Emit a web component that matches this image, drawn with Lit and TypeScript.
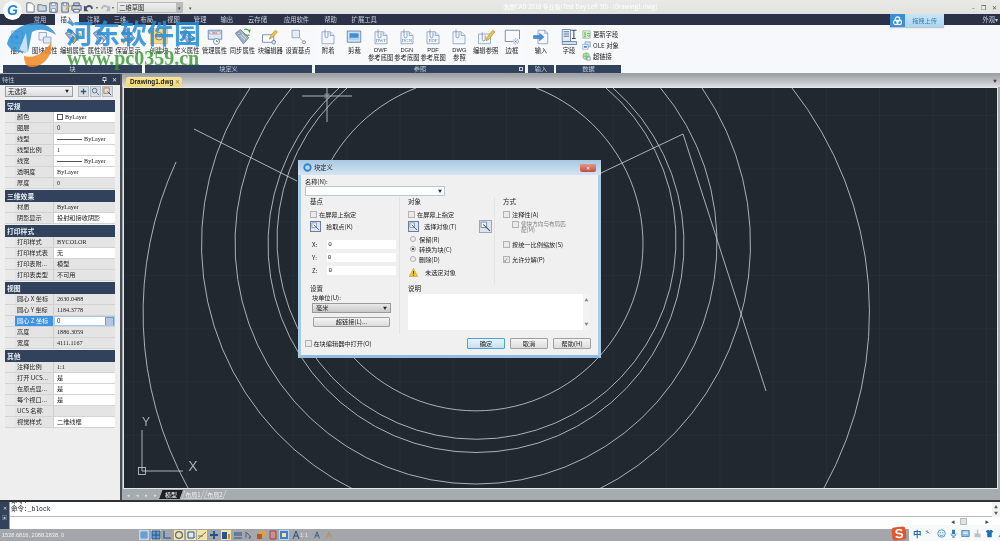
import { css, html, svg, unsafeCSS, LitElement } from 'lit';
import { customElement } from 'lit/decorators.js';

const CJK = unsafeCSS(`"Noto Sans CJK SC", "Liberation Sans", sans-serif`);

// ribbon icons, all on a 24x24 box
const page = (inner: unknown) => svg`
    <path d="M4 5h11l5 5v11H4z" fill="#f3f6fc" stroke="#7d97bd"/>
    <path d="M15 5v5h5" fill="#dfe8f5" stroke="#7d97bd"/>
    <path d="M8 2v9a2 2 0 0 0 4 0V6" fill="none" stroke="#6b86ad"/>
    ${inner}`;
const docLabel = (t: string) =>
    page(svg`<text x="12" y="19" text-anchor="middle" font-size="6.4" font-family="Liberation Serif" fill="#5f7ba6">${t}</text>`);
const tag = (inner: unknown = '') => svg`
    <path d="M3 7l7-5 11 11-7 8z" fill="#9db0ca" stroke="#5f7496"/>
    <circle cx="8" cy="7" r="1.6" fill="#fff" stroke="#5f7496"/>
    <path d="M10 10l6 6M12 8l6 6" stroke="#e6edf6"/>
    ${inner}`;
const pencil = svg`<path d="M13 19l2-5 7-7 2 2-7 7z" fill="#f0c24a" stroke="#a67c1c" stroke-width=".7"/>`;

const ICONS: Record<string, unknown> = {
    insert: svg`<path d="M5 4h14v16H5z" fill="#eef3fa" stroke="#7d97bd"/><path d="M3 12h10l-3-3m3 3l-3 3" fill="none" stroke="#3b78c4" stroke-width="1.6"/>`,
    blockAttr: svg`<path d="M4 6h10v10H4z" fill="#eef3fa" stroke="#7d97bd"/><path d="M10 12h10v8H10z" fill="#dfe8f5" stroke="#7d97bd"/>`,
    tagEdit: tag(pencil),
    tagClean: tag(svg`<circle cx="12" cy="17" r="4.5" fill="#fff" stroke="#54709a"/><path d="M12 14.5v3" stroke="#54709a"/>`),
    tagKeep: tag(svg`<path d="M3 15l3 5 5-7" fill="none" stroke="#e2a520" stroke-width="2"/>`),
    create: svg`<rect x="0" y="1" width="24" height="20" fill="#f6d68f" stroke="#e2b45c"/><circle cx="12" cy="11" r="5" fill="none" stroke="#6a6a5a"/>`,
    tagDefine: tag(svg`<path d="M15 21v-6h6" fill="none" stroke="#54709a" stroke-width="1.3"/>`),
    manage: svg`<path d="M3 3h18v12H3z" fill="#dde7f5" stroke="#54709a"/><path d="M5 5h14v3H5z" fill="#fff" stroke="#8aa0c0"/><text x="12" y="8" font-size="3.6" text-anchor="middle" fill="#c33">BEC</text><circle cx="14" cy="18" r="4" fill="#fff" stroke="#54709a"/><path d="M14 16v2h2" fill="none" stroke="#54709a"/>`,
    sync: tag(svg`<path d="M15 2a5 5 0 0 1 7 3l1-3M22 9a5 5 0 0 1-7-2" fill="none" stroke="#47a33c" stroke-width="1.5"/>`),
    blockEdit: svg`<path d="M2 9h15v10H2z" fill="#fff" stroke="#54709a"/><circle cx="17" cy="19" r="2.5" fill="#dfe8f5" stroke="#54709a"/><path d="M11 15l2-5 6-7 3 2-6 7z" fill="#f0c24a" stroke="#a67c1c" stroke-width=".7"/>`,
    basePoint: svg`<path d="M4 3h10v10H4z" fill="#e4ebf6" stroke="#7d97bd"/><path d="M14 13l6 6" stroke="#8898ad"/><circle cx="20" cy="19" r="2" fill="#fff" stroke="#54709a"/>`,
    attach: page(''),
    clip: svg`<path d="M3 4h18v15H3z" fill="#cfe0f4" stroke="#54709a"/><path d="M6 7h12v8H6z" fill="#3d8fd8"/><path d="M6 13h12v2H6z" fill="#b6d5f2"/>`,
    dwf: docLabel('DWF'),
    dgn: docLabel('DGN'),
    pdf: docLabel('PDF'),
    dwg: page(''),
    editRef: svg`<path d="M2 8h16v13H2z" fill="#f3f6fc" stroke="#7d97bd"/><path d="M7 6v9a2 2 0 0 0 4 0v-5" fill="none" stroke="#6b86ad"/><path d="M12 17l1-4 8-10 3 2-8 10z" fill="#f0c24a" stroke="#a67c1c" stroke-width=".7"/>`,
    frame: svg`<path d="M3 3h19v12" fill="none" stroke="#54709a"/><path d="M3 3v15h10" fill="none" stroke="#54709a"/><circle cx="17" cy="18" r="3.5" fill="none" stroke="#54709a" stroke-dasharray="1.5 1"/><path d="M15.5 16.5l3 3m0-3l-3 3" stroke="#3b78c4"/>`,
    importFile: svg`<path d="M8 3h9l4 4v14H8z" fill="#f3f6fc" stroke="#7d97bd"/><path d="M17 3v4h4" fill="none" stroke="#7d97bd"/><path d="M2 10h8V7l6 5-6 5v-3H2z" fill="#4a8ed6" stroke="#2c69ad" stroke-width=".6"/>`,
    field: svg`<path d="M3 2h11v16H3z" fill="#e4ebf6" stroke="#54709a"/><path d="M5 5h7M5 8h7M5 11h7" stroke="#31527f"/><path d="M15 3h7M18.5 3v11M16 14h5" stroke="#27456e" stroke-width="1.3" fill="none"/><path d="M3 18h19v4H3z" fill="#cfe0f4" stroke="#54709a"/>`,
    updateField: svg`<path d="M2 2h20v20H2z" fill="#dff0da" stroke="#3f8a3a"/><path d="M5 8h6M5 13h6M5 18h6" stroke="#3f8a3a" stroke-width="2"/><path d="M14 10a5 5 0 0 1 7 1M21 15a5 5 0 0 1-7-1" fill="none" stroke="#2d7a2a" stroke-width="2"/>`,
    ole: svg`<path d="M8 2h14v14H8z" fill="#cfe0f4" stroke="#27558e"/><path d="M2 9h14v13H2z" fill="#fff" stroke="#27558e"/><path d="M5 13h8v5H5z" fill="#3d8fd8"/>`,
    link: svg`<circle cx="11" cy="11" r="9" fill="#bfe0b8" stroke="#3f8a3a"/><path d="M3 11h16M11 2v18" stroke="#3f8a3a"/><path d="M13 13h9v9h-9z" fill="#dce8f5" stroke="#27558e"/>`,
};

const QUICK = [
    svg`<path d="M2 1h5l3 3v7H2z" fill="#fff" stroke="#5d6f88"/>`,
    svg`<path d="M1 3h4l1 1h4v6H1z" fill="#cfd8e4" stroke="#5d6f88"/>`,
    svg`<path d="M2 1h8v10H2z" fill="#d5deea" stroke="#4f627e"/><path d="M4 1h4v3H4zM4 7h4v4H4z" fill="#fff" stroke="#4f627e" stroke-width=".6"/>`,
    svg`<path d="M2 1h7v10H2z" fill="#d5deea" stroke="#4f627e"/><path d="M4 1h3v3H4z" fill="#fff" stroke="#4f627e" stroke-width=".6"/><path d="M6 9l1-3 4-3 1 1-4 4z" fill="#d8a93a"/>`,
    svg`<path d="M3 1h6v3H3zM1 4h10v5H1z" fill="#c9d2de" stroke="#4f627e"/><path d="M3 8h6v3H3z" fill="#fff" stroke="#4f627e"/>`,
    svg`<path d="M1 7a4.5 4.5 0 0 1 8-2l2-1v6H6l2-2a2.5 2.5 0 0 0-5 0z" transform="matrix(-1 0 0 1 12 0)" fill="#46556d"/>`,
];

const MENU = ['常用', '插入', '注释', '三维', '布局', '视图', '管理', '输出', '云存储', '应用软件', '帮助', '扩展工具'];

type Tool = { label: string; sub?: string; icon: string };
const PANELS: { title: string; width: number; corner?: boolean; tools: Tool[] }[] = [
    {
        title: '块', width: 139, tools: [
            { label: '插入', icon: 'insert' }, { label: '图块属性', icon: 'blockAttr' },
            { label: '编辑属性', icon: 'tagEdit' }, { label: '属性清理', icon: 'tagClean' }, { label: '保留显示', icon: 'tagKeep' },
        ],
    },
    {
        title: '块定义', width: 167, tools: [
            { label: '创建块', icon: 'create' }, { label: '定义属性', icon: 'tagDefine' }, { label: '管理属性', icon: 'manage' },
            { label: '同步属性', icon: 'sync' }, { label: '块编辑器', icon: 'blockEdit' }, { label: '设置基点', icon: 'basePoint' },
        ],
    },
    {
        title: '参照', width: 210, corner: true, tools: [
            { label: '附着', icon: 'attach' }, { label: '剪裁', icon: 'clip' },
            { label: 'DWF', sub: '参考底图', icon: 'dwf' }, { label: 'DGN', sub: '参考底图', icon: 'dgn' }, { label: 'PDF', sub: '参考底图', icon: 'pdf' },
            { label: 'DWG', sub: '参照', icon: 'dwg' }, { label: '编辑参照', icon: 'editRef' }, { label: '边框', icon: 'frame' },
        ],
    },
    { title: '输入', width: 26, tools: [{ label: '输入', icon: 'importFile' }] },
];

type Row = { name: string; value: string; white?: boolean; kind?: 'swatch' | 'line' | 'mono' | 'selected' };
const SECTIONS: { title: string; rows: Row[] }[] = [
    {
        title: '常规', rows: [
            { name: '颜色', value: 'ByLayer', white: true, kind: 'swatch' }, { name: '图层', value: '0' },
            { name: '线型', value: 'ByLayer', white: true, kind: 'line' }, { name: '线型比例', value: '1', white: true, kind: 'mono' },
            { name: '线宽', value: 'ByLayer', white: true, kind: 'line' }, { name: '透明度', value: 'ByLayer', white: true, kind: 'mono' },
            { name: '厚度', value: '0', kind: 'mono' },
        ],
    },
    {
        title: '三维效果', rows: [
            { name: '材质', value: 'ByLayer', kind: 'mono' }, { name: '阴影显示', value: '投射和接收阴影', white: true },
        ],
    },
    {
        title: '打印样式', rows: [
            { name: '打印样式', value: 'BYCOLOR', kind: 'mono' }, { name: '打印样式表', value: '无', white: true },
            { name: '打印表附...', value: '模型' }, { name: '打印表类型', value: '不可用' },
        ],
    },
    {
        title: '视图', rows: [
            { name: '圆心 X 坐标', value: '2630.0488', kind: 'mono' }, { name: '圆心 Y 坐标', value: '1184.3778', kind: 'mono' },
            { name: '圆心 Z 坐标', value: '0', kind: 'selected' }, { name: '高度', value: '1886.3059', kind: 'mono' },
            { name: '宽度', value: '4111.1167', kind: 'mono' },
        ],
    },
    {
        title: '其他', rows: [
            { name: '注释比例', value: '1:1', kind: 'mono' }, { name: '打开 UCS...', value: '是', white: true },
            { name: '在原点显...', value: '是', white: true }, { name: '每个视口...', value: '是', white: true },
            { name: 'UCS 名称', value: '' }, { name: '视觉样式', value: '二维线框', white: true },
        ],
    },
];

// status bar toggles: [active background, glyph]
const STATUS: [string, unknown][] = [
    ['#b9d6f0', svg`<path d="M1 3h8M1 5h8M1 7h8M3 1v8M5 1v8M7 1v8" stroke="#3a72b0" stroke-width=".7"/>`],
    ['#f4e3a8', svg`<path d="M1 1h8v8H1zM1 5h8M5 1v8" fill="#5f9bd6" stroke="#27558e"/>`],
    ['transparent', svg`<path d="M2 1v7h7" fill="none" stroke="#27558e" stroke-width="1.2"/>`],
    ['#f4e3a8', svg`<circle cx="5" cy="5" r="3.4" fill="none" stroke="#586b85" stroke-width="1.2"/>`],
    ['#f4e3a8', svg`<path d="M2 2h6v6H2z" fill="#dfe8f5" stroke="#27558e"/>`],
    ['#f4e3a8', svg`<path d="M1 9l8-7M1 6h5" stroke="#7a7a4a"/>`],
    ['transparent', svg`<path d="M5 1v8M1 5h8" stroke="#1f4f93" stroke-width="1.8"/>`],
    ['#f4e3a8', svg`<path d="M1 2h5v7H1z" fill="#27558e"/><path d="M7 4h2v5H7z" fill="#d98a2b"/>`],
    ['transparent', svg`<path d="M1 3h8M1 5h8M1 8h8" stroke="#27558e" stroke-width="1.2"/>`],
    ['transparent', svg`<path d="M2 2l5 5-2 0 1 2M2 2v6" fill="none" stroke="#4f627e"/>`],
    ['transparent', svg`<path d="M3 1h6v6H3z" fill="#e0a33a"/><path d="M1 4h5v5H1z" fill="#b8552a"/>`],
    ['transparent', svg`<path d="M2 1h6v8H2z" fill="#d88a8a" stroke="#8a4a4a"/>`],
    ['#b9d6f0', svg`<path d="M1 1h8v8H1z" fill="#3f7fc4"/><path d="M3 3h4v4H3z" fill="#f3e3a8"/>`],
    ['transparent', svg`<path d="M5 1L2 9M5 1l3 8M3 6h4" stroke="#2f4f80" fill="none"/>`],
];

const TRAY = [
    svg`<path d="M1 3h3l-1-1M2 6l2-2 2 2" stroke="#3a78b8" fill="none"/>`,
    svg`<circle cx="6" cy="6" r="5" fill="#e7f3fb" stroke="#2f7fc0"/><circle cx="4.3" cy="5" r=".8" fill="#2f7fc0"/><circle cx="7.7" cy="5" r=".8" fill="#2f7fc0"/><path d="M3.5 7.5a3 3 0 0 0 5 0" fill="none" stroke="#2f7fc0"/>`,
    svg`<path d="M4 1h4v6H4z" fill="#2f7fc0"/><path d="M2.5 6a3.5 3.5 0 0 0 7 0M6 9.5V11M4 11h4" stroke="#2f7fc0" fill="none"/>`,
    svg`<path d="M1 2h10v8H1z" fill="#8fc0e4" stroke="#2f7fc0"/><path d="M3 4h6M3 6h6" stroke="#fff"/>`,
    svg`<path d="M5 1h2v5H5zM2 6h8v5H2z" fill="#b9c1c9"/>`,
    svg`<path d="M1 3l3-2 2 1 2-1 3 2-1.5 2H9v6H3V5H2.5z" fill="#1f6fb5"/>`,
    svg`<path d="M2 10l5-5a3 3 0 0 1 4-3L9 4l-1-1-1 2-4 6z" fill="#2f7fc0"/>`,
];

@customElement('prop-panel')
class PropPanel extends LitElement {
    static override styles = css`
        :host {
            display: block;
            width: 120px;
            background: #eeeeee;
            font-family: ${CJK};
            box-sizing: border-box;
            overflow: hidden;
        }
        .head {
            height: 11px;
            background: #2d3a50;
            color: #b8c0cc;
            font-size: 6.2px;
            line-height: 11px;
            padding: 0 3px 0 2px;
            display: flex;
            justify-content: space-between;
            align-items: center;
        }
        .head span:last-child { display: flex; align-items: center; gap: 5px; color: #e4e8ee; }
        .head svg { width: 5px; height: 6px; }
        .sel-row {
            display: flex;
            align-items: center;
            gap: 4px;
            padding: 2px 5px 2px 5px;
            height: 13px;
            box-sizing: border-box;
        }
        .sel {
            width: 68px;
            height: 11px;
            border: 1px solid #98a0a8;
            background: linear-gradient(#f6f6f6, #dcdcdc);
            font-size: 6.3px;
            line-height: 9px;
            box-sizing: border-box;
            padding-left: 2px;
            display: flex;
            justify-content: space-between;
            color: #222;
        }
        .sel i { font-style: normal; font-size: 4px; padding-right: 3px; line-height: 9px; }
        .mini {
            width: 11px;
            height: 11px;
            border: 1px solid #b4bac2;
            background: #d9dee5;
            box-sizing: border-box;
        }
        .mini svg { display: block; width: 9px; height: 9px; }
        .minis { display: flex; gap: 1px; margin-left: 1px; }
        .list { padding: 2px 5px 0 5px; }
        .sec-head {
            height: 12px;
            background: #30425c;
            color: #e8edf2;
            font-size: 6.8px;
            font-weight: 700;
            line-height: 12px;
            padding-left: 2px;
        }
        .row {
            display: grid;
            grid-template-columns: 10px 39px 1fr;
            height: 11px;
            font-size: 6.2px;
            line-height: 10px;
            color: #222;
            box-sizing: border-box;
            border-bottom: 1px solid #d3d3d3;
            white-space: nowrap;
        }
        .group { margin-bottom: 1px; }
        .gutter { background: #e9e9e9; }
        .name { background: #e4e4e4; padding-left: 2px; overflow: hidden; border-right: 1px solid #cfcfcf; }
        .value { background: #e4e4e4; padding-left: 3px; overflow: hidden; display: flex; align-items: center; gap: 2px; }
        .value.white { background: #fff; }
        .value.mono { font-family: "Liberation Serif", serif; font-size: 6.2px; }
        .selected .name { background: #3f92e2; color: #fff; }
        .selected .value { background: #fff; outline: 1px solid #a8c8ea; outline-offset: -1px; justify-content: space-between; }
        .swatch { width: 6px; height: 6px; border: 1px solid #555; background: #fff; box-sizing: border-box; }
        .line { width: 25px; border-top: 1px solid #555; }
        .pick { width: 9px; height: 9px; background: #b5c7df; border: 1px solid #7f97b8; box-sizing: border-box; margin-right: 1px; }
    `;

    private _value(r: Row) {
        if (r.kind === 'swatch' || r.kind === 'line') {
            return html`<div class="value white mono"><span class=${r.kind}></span>${r.value}</div>`;
        }
        if (r.kind === 'selected') {
            return html`<div class="value"><span>${r.value}</span><span class="pick"></span></div>`;
        }
        return html`<div class="value ${r.white ? 'white' : ''} ${r.kind === 'mono' ? 'mono' : ''}">${r.value}</div>`;
    }

    override render() {
        return html`
            <div class="head">
                <span>特性</span>
                <span>
                    <svg viewBox="0 0 5 6"><path d="M1 .5h3v3H1zM.5 3.5h4M2.5 3.5V6" fill="none" stroke="#e4e8ee" stroke-width=".8"/></svg>
                    ✕
                </span>
            </div>
            <div class="sel-row">
                <div class="sel"><span>无选择</span><i>▼</i></div>
                <div class="minis">
                    <div class="mini"><svg viewBox="0 0 10 10"><path d="M5 2v6M2 5h6" stroke="#27558e" stroke-width="1.4"/></svg></div>
                    <div class="mini"><svg viewBox="0 0 10 10"><circle cx="4" cy="4" r="2.6" fill="none" stroke="#586b85"/><path d="M6 6l3 3" stroke="#586b85"/></svg></div>
                    <div class="mini"><svg viewBox="0 0 10 10"><path d="M1 1h6v6H1z" fill="none" stroke="#c0802a"/><path d="M5 5l4 4" stroke="#27558e"/></svg></div>
                </div>
            </div>
            <div class="list">
                ${SECTIONS.map(s => html`
                    <div class="group">
                        <div class="sec-head">${s.title}</div>
                        ${s.rows.map(r => html`
                            <div class="row ${r.kind === 'selected' ? 'selected' : ''}">
                                <div class="gutter"></div>
                                <div class="name">${r.name}</div>
                                ${this._value(r)}
                            </div>
                        `)}
                    </div>
                `)}
            </div>
        `;
    }
}

@customElement('block-dialog')
class BlockDialog extends LitElement {
    static override styles = css`
        :host {
            position: absolute;
            left: 298px;
            top: 160px;
            width: 303px;
            height: 198px;
            box-sizing: border-box;
            background: #f0f0f0;
            border: 3px solid #a9cbe6;
            border-top: 0;
            border-bottom-color: #8fbde0;
            border-radius: 2px 2px 0 0;
            font-family: ${CJK};
            font-size: 6.2px;
            color: #222;
            display: block;
        }
        .title {
            height: 15px;
            margin: 0 -3px;
            padding: 0 5px;
            background: linear-gradient(#a8c8e2, #d5e5f2);
            display: flex;
            align-items: center;
            gap: 2px;
            font-size: 6.3px;
        }
        .title svg { width: 9px; height: 9px; }
        .close {
            margin-left: auto;
            width: 16px;
            height: 8px;
            background: linear-gradient(#e09a8a, #c14e3e);
            color: #fff;
            font-size: 5px;
            line-height: 8px;
            text-align: center;
            border-radius: 0 0 2px 2px;
        }
        .body { padding: 2px 4px 0 4px; }
        .lbl { height: 9px; line-height: 9px; }
        .combo {
            width: 140px;
            height: 10px;
            background: #fff;
            border: 1px solid #b4c8dc;
            box-sizing: border-box;
            text-align: right;
            font-size: 4px;
            line-height: 9px;
            padding-right: 2px;
        }
        .grid {
            display: grid;
            grid-template-columns: 94px 95px 100px;
            grid-template-rows: 87px 50px;
            margin-top: 1px;
        }
        .col { padding-left: 5px; position: relative; box-sizing: border-box; }
        .col.line { border-left: 1px solid #e3e3e3; padding-left: 8px; }
        .col.note { grid-column: 2 / 4; border-left: 1px solid #e3e3e3; padding-left: 8px; }
        .gtitle { height: 9px; line-height: 9px; font-size: 6.5px; margin-bottom: 3px; }
        .gtitle.tight { margin-bottom: 0; }
        .gtitle.note { margin-bottom: 1px; }
        .line-row { display: flex; align-items: center; height: 10px; gap: 2px; white-space: nowrap; }
        .box {
            width: 7px;
            height: 7px;
            background: #eaeaea;
            border: 1px solid #b2b2b2;
            box-sizing: border-box;
            flex: none;
            font-size: 5px;
            line-height: 6px;
            color: #446;
        }
        .pick-row { display: flex; align-items: center; gap: 5px; height: 15px; margin-top: 0; white-space: nowrap; }
        .pick {
            width: 11px;
            height: 11px;
            background: #dbe4f0;
            border: 1px solid #6a7f9e;
            box-sizing: border-box;
            flex: none;
        }
        .pick svg { display: block; width: 9px; height: 9px; }
        .pick.quick { width: 13px; height: 13px; margin-left: 17px; border-color: #9aa8ba; }
        .pick.quick svg { width: 11px; height: 11px; }
        .xyz { display: flex; align-items: center; height: 13px; gap: 10px; padding-left: 2px; margin-top: 0; }
        .xyz .input {
            width: 69px;
            height: 9px;
            background: #fff;
            line-height: 9px;
            padding-left: 1px;
            box-sizing: border-box;
            font-family: "Liberation Mono", monospace;
            font-size: 6px;
        }
        .xyz.first { margin-top: 4px; }
        .radio {
            width: 6px;
            height: 6px;
            border: 1px solid #adadad;
            border-radius: 50%;
            background: #eee;
            box-sizing: border-box;
            flex: none;
            margin-left: 2px;
            margin-right: 1px;
        }
        .radio.on { background: radial-gradient(#3f4f66 45%, #e8e8e8 50%); }
        .warn { display: flex; align-items: center; gap: 7px; height: 12px; margin-top: 2px; padding-left: 1px; }
        .warn svg { width: 9px; height: 9px; }
        .wrap { display: flex; gap: 2px; padding-left: 9px; margin: 2px 0 5px 0; color: #808080; font-size: 5.6px; line-height: 6px; height: 13px; }
        .wrap .text { width: 46px; }
        .gap5 { margin-top: 5px; }
        .ind { padding-left: 2px; }
        .sel {
            width: 79px;
            height: 10px;
            margin: 1px 0 4px 2px;
            background: linear-gradient(#e9e9e9, #c9c9c9);
            border: 1px solid #9a9a9a;
            box-sizing: border-box;
            display: flex;
            justify-content: space-between;
            padding: 0 3px;
            line-height: 8px;
        }
        .sel i { font-style: normal; font-size: 4px; }
        .btn {
            background: linear-gradient(#f4f4f4, #dcdcdc);
            border: 1px solid #a0a0a0;
            border-radius: 1px;
            box-sizing: border-box;
            text-align: center;
            color: #222;
        }
        .bind { width: 77px; height: 10px; line-height: 8px; margin-left: 3px; }
        .area { display: flex; width: 182px; height: 36px; margin-top: 0; }
        .area .white { flex: 1; background: #fff; }
        .area .bar { width: 7px; color: #888; font-size: 4px; display: flex; flex-direction: column; justify-content: space-between; align-items: center; padding: 3px 0; background: #f3f3f3; }
        .foot { display: flex; align-items: center; height: 12px; margin-top: 3px; }
        .foot .btn { width: 38px; height: 11px; line-height: 9px; margin-left: 5px; }
        .foot .btn.main { border-color: #4f9fd8; background: linear-gradient(#e8f4fb, #c6e0f2); margin-left: auto; }
        .foot .last { margin-right: 3px; }
    `;

    override render() {
        const lens = html`<svg viewBox="0 0 10 10"><path d="M1 1h5v5H1z" fill="#fff" stroke="#5d6f88" stroke-width=".7"/><path d="M3 3l6 6" stroke="#3f5a80"/></svg>`;
        return html`
            <div class="title">
                <svg viewBox="0 0 10 10"><circle cx="5" cy="5" r="3.6" fill="none" stroke="#2f86cf" stroke-width="2"/></svg>
                <span>块定义</span>
                <span class="close">✕</span>
            </div>
            <div class="body">
                <div class="lbl">名称(N):</div>
                <div class="combo">▼</div>
                <div class="grid">
                    <div class="col">
                        <div class="gtitle">基点</div>
                        <div class="line-row"><span class="box"></span>在屏幕上指定</div>
                        <div class="pick-row"><span class="pick">${lens}</span>拾取点(K)</div>
                        ${['X', 'Y', 'Z'].map((a, i) => html`
                            <div class="xyz ${i === 0 ? 'first' : ''}"><span>${a}:</span><div class="input">0</div></div>
                        `)}
                    </div>
                    <div class="col line">
                        <div class="gtitle">对象</div>
                        <div class="line-row"><span class="box"></span>在屏幕上指定</div>
                        <div class="pick-row"><span class="pick">${lens}</span>选择对象(T)<span class="pick quick">${lens}</span></div>
                        <div class="line-row"><span class="radio"></span>保留(R)</div>
                        <div class="line-row"><span class="radio on"></span>转换为块(C)</div>
                        <div class="line-row"><span class="radio"></span>删除(D)</div>
                        <div class="warn">
                            <svg viewBox="0 0 10 10"><path d="M5 .5L9.8 9.5H.2z" fill="#f4c430" stroke="#b58a12" stroke-width=".5"/><path d="M5 3.5v3M5 7.5v1" stroke="#333"/></svg>
                            未选定对象
                        </div>
                    </div>
                    <div class="col line">
                        <div class="gtitle">方式</div>
                        <div class="line-row"><span class="box"></span>注释性(A)</div>
                        <div class="wrap"><span class="box"></span><span class="text">使块方向与布局匹配(M)</span></div>
                        <div class="line-row"><span class="box"></span>按统一比例缩放(S)</div>
                        <div class="line-row gap5"><span class="box">✓</span>允许分解(P)</div>
                    </div>
                    <div class="col">
                        <div class="gtitle tight">设置</div>
                        <div class="lbl ind">块单位(U):</div>
                        <div class="sel"><span>毫米</span><i>▼</i></div>
                        <div class="btn bind">超链接(L)...</div>
                    </div>
                    <div class="col note">
                        <div class="gtitle note">说明</div>
                        <div class="area"><div class="white"></div><div class="bar"><span>▲</span><span>▼</span></div></div>
                    </div>
                </div>
                <div class="foot">
                    <span class="box"></span>&nbsp;在块编辑器中打开(O)
                    <div class="btn main">确定</div>
                    <div class="btn">取消</div>
                    <div class="btn last">帮助(H)</div>
                </div>
            </div>
        `;
    }
}

@customElement('app-root')
export class AppRoot extends LitElement {
    static override styles = css`
        :host {
            display: block;
            width: 1000px;
            height: 541px;
            position: relative;
            overflow: hidden;
            font-family: ${CJK};
            background: #a6abb0;
            filter: blur(0.3px);
        }
        .titlebar {
            height: 14px;
            background: linear-gradient(#e9e9e6, #e2e2df);
            display: flex;
            align-items: center;
            position: relative;
        }
        .app-logo {
            width: 19px;
            height: 19px;
            margin: 1px 0 0 3px;
            align-self: flex-start;
            border-radius: 50%;
            background: #fff;
            color: #1e86cc;
            font: italic 700 14px/19px "Liberation Sans", sans-serif;
            text-align: center;
            z-index: 1;
            flex: none;
        }
        .quick { display: flex; align-items: center; gap: 0; margin-left: 3px; }
        .quick svg { width: 11px; height: 11px; margin-right: .6px; display: block; }
        .quick .tiny { font-size: 4px; color: #555; margin-left: 1px; margin-right: 2px; }
        .workspace-combo {
            width: 66px;
            height: 11px;
            margin-left: 1px;
            background: linear-gradient(#efefef, #dcdcdc);
            border: 1px solid #b9b9b9;
            box-sizing: border-box;
            font-size: 6.3px;
            line-height: 9px;
            padding-left: 1px;
            color: #222;
            position: relative;
            flex: none;
        }
        .workspace-combo::after {
            content: '▾';
            position: absolute;
            right: 0;
            top: 0;
            width: 6px;
            height: 9px;
            background: #bbb;
            font-size: 5px;
            text-align: center;
            color: #444;
        }
        .more { font-size: 5px; color: #555; margin-left: 6px; }
        .doc-title {
            position: absolute;
            left: 503px;
            top: 2px;
            font-size: 6px;
            line-height: 10px;
            color: #fff;
            white-space: nowrap;
        }
        .win { margin-left: auto; display: flex; gap: 6px; padding-right: 3px; font-size: 6px; color: #555; }
        .menubar {
            height: 11px;
            background: #2b3248;
            display: flex;
            align-items: center;
            position: relative;
            padding-left: 28px;
            color: #c8cfda;
            font-size: 6.3px;
        }
        .menu-item { width: 24px; text-align: center; line-height: 11px; white-space: nowrap; flex: none; margin-right: 2.7px; }
        .menu-item.wide3 { width: 32px; margin-right: 4px; }
        .menu-item.wide4 { width: 38px; margin-right: 3px; }
        .menu-item.active { background: #f4f6f9; color: #333; }
        .upload {
            position: absolute;
            left: 890px;
            top: 0;
            width: 54px;
            height: 13px;
            display: flex;
            z-index: 1;
            background: linear-gradient(#c8e6f8, #a9d6f2);
            color: #3f7ba8;
            font-size: 6.2px;
            line-height: 13px;
            box-shadow: 0 1px 1px rgba(0, 0, 0, 0.2);
        }
        .upload .ico { width: 15px; background: #3a8fd8; display: flex; align-items: center; justify-content: center; }
        .upload .ico svg { width: 11px; height: 10px; }
        .upload .txt { flex: 1; text-align: center; }
        .skin { position: absolute; right: 2px; top: 0; line-height: 11px; font-size: 6.3px; color: #c8cfda; }
        .ribbon {
            height: 49px;
            background: #f6f8fc;
            display: flex;
            padding-left: 3px;
            gap: 3px;
            box-sizing: border-box;
            border-bottom: 1px solid #a0a4a8;
        }
        .panel { display: flex; flex-direction: column; background: #f8f9fb; }
        .panel.data { width: 65px; margin-left: -1px; }
        .tools { flex: 1; display: flex; min-height: 0; }
        .tool { flex: 1 1 0; min-width: 0; display: flex; flex-direction: column; align-items: center; padding-top: 3px; font-size: 6.3px; line-height: 7px; color: #222; white-space: nowrap; }
        .tool svg { width: 18px; height: 18px; flex: none; margin-bottom: 1px; }
        .tool .latin { font-family: "Liberation Sans", sans-serif; font-size: 5.8px; }
        .panel-foot {
            height: 8px;
            background: #30425c;
            color: #c8d0da;
            font-size: 6.2px;
            line-height: 8px;
            text-align: center;
            position: relative;
            margin-bottom: 0;
        }
        .corner { position: absolute; right: 2px; top: 1.5px; width: 4px; height: 4px; border: 1px solid #cdd5df; box-sizing: border-box; }
        .data-tools { flex: 1; display: flex; }
        .data-big { flex: none; width: 26px; }
        .data-list { flex: 1; display: flex; flex-direction: column; padding-top: 4px; gap: 1px; }
        .data-row { display: flex; align-items: center; gap: 2px; height: 10px; font-size: 6.3px; color: #222; white-space: nowrap; }
        .data-row svg { width: 9px; height: 9px; flex: none; }
        .workspace { height: 426px; display: flex; }
        .workarea {
            flex: 1;
            display: flex;
            flex-direction: column;
            border-left: 2px solid #4a4f56;
            padding: 0 2px 0 1px;
            background: #a6abb0;
        }
        .doc-tabs {
            height: 13px;
            margin: 0 -2px 0 -1px;
            padding-left: 4px;
            background: linear-gradient(#9b9fa3, #dcdee0);
            display: flex;
            align-items: flex-end;
            position: relative;
        }
        .doc-tab {
            width: 56px;
            height: 10px;
            background: linear-gradient(#f9e79a, #f4d86a);
            border-radius: 3px 3px 0 0;
            font: 700 6.4px/10px "Liberation Sans", sans-serif;
            color: #222;
            padding-left: 4px;
            box-sizing: border-box;
            display: flex;
            justify-content: space-between;
            padding-right: 2px;
        }
        .doc-tab i { font-style: normal; font-weight: 400; color: #777; }
        .tab-menu { position: absolute; right: 3px; top: 4px; font-size: 4px; color: #444; }
        .canvas { height: 402px; border: 1px solid #e4e6e8; box-sizing: border-box; background: #212830; position: relative; width: 875px; }
        .canvas svg { display: block; width: 873px; height: 400px; }
        .layouts { height: 11px; display: flex; align-items: center; padding-left: 1px; font-size: 6px; color: #eef0f2; }
        .nav { width: 9px; font-size: 5px; color: #dfe2e5; text-align: center; }
        .ltab { width: 20px; height: 9px; line-height: 9px; text-align: center; border: 1px solid #c8ccd0; border-top: 0; box-sizing: border-box; margin-left: 2px; transform: skewX(-20deg); }
        .ltab span { display: block; transform: skewX(20deg); }
        .ltab.on { background: #1e2126; border-color: #1e2126; color: #fff; margin-left: 1px; }
        .command {
            height: 29px;
            border-top: 2px solid #2f3338;
            display: flex;
            box-sizing: border-box;
            background: #fff;
        }
        .cmd-side { width: 9px; background: #30425c; color: #d4dbe4; font-size: 5px; text-align: center; line-height: 9px; padding-top: 1px; flex: none; }
        .cmd-main { flex: 1; display: flex; flex-direction: column; position: relative; border-left: 1px solid #9aa0a6; }
        .cmd-log { height: 15px; font: 6.4px/7px "Liberation Mono", "Noto Sans CJK SC", monospace; color: #222; padding-left: 1px; overflow: hidden; border-bottom: 1px solid #bbb; white-space: nowrap; box-sizing: border-box; }
        .cmd-log div { height: 7px; }
        .cmd-log .cut { margin-top: -4px; }
        .cmd-log .now { margin-top: 1px; }
        .cmd-input { flex: 1; position: relative; }
        .vbar { position: absolute; right: 0; top: 0; width: 8px; height: 15px; font-size: 4px; color: #555; display: flex; flex-direction: column; justify-content: space-between; align-items: center; padding: 2px 0; box-sizing: border-box; background: #f3f3f3; }
        .hbar { position: absolute; left: 940px; top: 0; width: 40px; height: 10px; display: flex; align-items: center; justify-content: space-between; font-size: 4px; color: #444; padding: 0 1px; box-sizing: border-box; }
        .hbar b { width: 7px; height: 7px; background: #dfe3e7; border: 1px solid #b7bcc1; box-sizing: border-box; position: absolute; left: 10px; top: 1px; }
        .statusbar { height: 12px; background: #a3a7ab; display: flex; align-items: center; color: #f1f2f3; font: 5.6px/12px "Liberation Sans", sans-serif; position: relative; padding-left: 2px; }
        .stat-icons { position: absolute; left: 139px; top: 1px; display: flex; }
        .stat { width: 10px; height: 10px; margin-right: 1.7px; }
        .stat svg { display: block; width: 10px; height: 10px; }
        .scale { position: absolute; left: 300px; top: 0; color: #e9ebed; font-size: 5.6px; }
        .stat-end { position: absolute; left: 313px; top: 2px; display: flex; gap: 4px; }
        .stat-end svg { width: 8px; height: 8px; }
        .ime {
            position: absolute;
            left: 891px;
            top: 525px;
            width: 109px;
            height: 16px;
            background: linear-gradient(to right, transparent 18px, #f8f9fa 18px);
            display: flex;
            align-items: center;
            gap: 3px;
            z-index: 3;
            color: #1f6fb5;
            font-size: 8.5px;
            font-weight: 700;
        }
        .ime svg { width: 9px; height: 9px; flex: none; }
        .sogou {
            width: 14px;
            height: 13px;
            background: #e2562a;
            border-radius: 3px;
            color: #fff;
            font: 700 13px/13px "Liberation Sans", sans-serif;
            text-align: center;
            margin: 0 4px 0 1px;
            transform: rotate(-6deg);
            flex: none;
        }
        .wm { position: absolute; left: 0; top: 0; width: 0; height: 0; z-index: 4; pointer-events: none; }
        .wm svg { position: absolute; left: 4px; top: 20px; width: 56px; height: 50px; opacity: 0.85; }
        .wm-cn { position: absolute; left: 66px; top: 16px; white-space: nowrap; font: 700 27px/34px "Noto Sans CJK SC", sans-serif; color: rgba(34, 140, 216, 0.85); }
        .wm-url { position: absolute; left: 67px; top: 47px; white-space: nowrap; font: 700 20px/22px "Liberation Serif", serif; color: rgba(52, 150, 44, 0.8); }
    `;

    private _menuClass(m: string) {
        if (m === '插入') return 'menu-item active';
        if (m.length === 3) return 'menu-item wide3';
        if (m.length === 4) return 'menu-item wide4';
        return 'menu-item';
    }

    private _canvas() {
        const arcs = [
            // outermost circle, left and right parts
            'M176 162A363 363 0 0 0 188 488', 'M792 88A363 363 0 0 1 824 488',
            'M250 88A274.5 274.5 0 1 0 702 88', 'M291.5 88A241 241 0 1 0 660.5 88',
            'M339 88A208 208 0 1 0 613 88', 'M347 88A199.5 199.5 0 1 0 606 88',
            'M416 88A167 167 0 1 0 536 88',
        ];
        return html`
            <svg viewBox="124 88 873 400">
                <defs>
                    <pattern id="major" x="133" y="115" width="53.3" height="53.3" patternUnits="userSpaceOnUse">
                        <path d="M53.3 0H0V53.3" fill="none" stroke="#2a323b" stroke-width="1"/>
                    </pattern>
                </defs>
                <rect x="124" y="88" width="873" height="400" fill="url(#major)"/>
                <g fill="none" stroke="#d0d3d6" stroke-width=".8">
                    ${arcs.map(d => svg`<path d=${d}/>`)}
                    <path d="M194 129L297 181"/>
                    <path d="M601 173L683 134L766 391"/>
                    <path d="M302 96H352M327 88V122"/>
                    <rect x="325" y="94" width="4" height="4" stroke="#8f9499"/>
                    <path d="M142 430V471M142 471H183"/>
                    <rect x="138.5" y="467.5" width="7" height="7"/>
                </g>
                <text x="146" y="426" text-anchor="middle" font-size="12" font-family="Liberation Sans" fill="#a9adb2">Y</text>
                <text x="193" y="471" text-anchor="middle" font-size="14" font-family="Liberation Sans" fill="#a9adb2">X</text>
            </svg>
        `;
    }

    override render() {
        return html`
            <div class="titlebar">
                <div class="app-logo">G</div>
                <div class="quick">
                    ${QUICK.map(q => html`<svg viewBox="0 0 12 12">${q}</svg>`)}
                    <span class="tiny">▾</span>
                    <svg viewBox="0 0 12 12"><path d="M1 7a4.5 4.5 0 0 1 8-2l2-1v6H6l2-2a2.5 2.5 0 0 0-5 0z" fill="#b4bac2"/></svg>
                    <span class="tiny">▾</span>
                </div>
                <div class="workspace-combo">二维草图</div>
                <span class="more">▾</span>
                <div class="doc-title">浩辰CAD 2018 专业版(Test Day Left 30) - [Drawing1.dwg]</div>
                <div class="win"><span>–</span><span>❐</span><span>✕</span></div>
            </div>
            <div class="menubar">
                ${MENU.map(m => html`<div class=${this._menuClass(m)}>${m}</div>`)}
                <div class="upload">
                    <div class="ico"><svg viewBox="0 0 12 10"><circle cx="4" cy="6.5" r="2.4" fill="none" stroke="#fff" stroke-width="1.3"/><circle cx="8" cy="6.5" r="2.4" fill="none" stroke="#fff" stroke-width="1.3"/><circle cx="6" cy="3" r="2.4" fill="none" stroke="#fff" stroke-width="1.3"/></svg></div>
                    <div class="txt">拖拽上传</div>
                </div>
                <div class="skin">外观▾</div>
            </div>
            <div class="ribbon">
                ${PANELS.map(p => html`
                    <div class="panel" style="width:${p.width}px">
                        <div class="tools">
                            ${p.tools.map(t => html`
                                <div class="tool">
                                    <svg viewBox="0 0 24 24">${ICONS[t.icon]}</svg>
                                    <span class=${t.sub ? 'latin' : ''}>${t.label}</span>
                                    ${t.sub ? html`<span>${t.sub}</span>` : ''}
                                </div>
                            `)}
                        </div>
                        <div class="panel-foot">${p.title}${p.corner ? html`<span class="corner"></span>` : ''}</div>
                    </div>
                `)}
                <div class="panel data">
                    <div class="data-tools">
                        <div class="tool data-big"><svg viewBox="0 0 24 24">${ICONS.field}</svg><span>字段</span></div>
                        <div class="data-list">
                            <div class="data-row"><svg viewBox="0 0 24 24">${ICONS.updateField}</svg>更新字段</div>
                            <div class="data-row"><svg viewBox="0 0 24 24">${ICONS.ole}</svg>OLE 对象</div>
                            <div class="data-row"><svg viewBox="0 0 24 24">${ICONS.link}</svg>超链接</div>
                        </div>
                    </div>
                    <div class="panel-foot">数据</div>
                </div>
            </div>
            <div class="workspace">
                <prop-panel></prop-panel>
                <div class="workarea">
                    <div class="doc-tabs">
                        <div class="doc-tab"><span>Drawing1.dwg</span><i>✕</i></div>
                        <span class="tab-menu">▼</span>
                    </div>
                    <div class="canvas">${this._canvas()}</div>
                    <div class="layouts">
                        ${['◂', '◂', '▸', '▸'].map(n => html`<span class="nav">${n}</span>`)}
                        <div class="ltab on"><span>模型</span></div>
                        <div class="ltab"><span>布局1</span></div>
                        <div class="ltab"><span>布局2</span></div>
                    </div>
                </div>
            </div>
            <div class="command">
                <div class="cmd-side">✕<br />▣</div>
                <div class="cmd-main">
                    <div class="cmd-log"><div class="cut">命令:</div><div class="now">命令:_block</div></div>
                    <div class="vbar"><span>▲</span><span>▼</span></div>
                    <div class="cmd-input"><div class="hbar"><span>◀</span><b></b><span>▶</span></div></div>
                </div>
            </div>
            <div class="statusbar">
                1528.6816, 2088.2838, 0
                <div class="stat-icons">
                    ${STATUS.map(([bg, g]) => html`<div class="stat" style="background:${bg}"><svg viewBox="0 0 10 10">${g}</svg></div>`)}
                </div>
                <span class="scale">1:1</span>
                <div class="stat-end">
                    <svg viewBox="0 0 10 10"><path d="M5 1L2 9M5 1l3 8M3 6h4" stroke="#2f4f80" fill="none"/></svg>
                    <svg viewBox="0 0 10 10"><path d="M5 1L2 9M5 1l3 8M3 6h4" stroke="#c08a3a" fill="none"/></svg>
                </div>
            </div>
            <block-dialog></block-dialog>
            <div class="ime">
                <div class="sogou">S</div>
                <span>中</span>
                ${TRAY.map(t => html`<svg viewBox="0 0 12 12">${t}</svg>`)}
            </div>
            <div class="wm">
                <svg viewBox="0 0 56 50">
                    <path d="M3 24C6 10 20 3 32 3c9 0 17 5 20 12-8-5-17-7-24-3l-4 20c-9 2-17-1-21-8z" fill="#2c93d8"/>
                    <path d="M20 36c11 3 22-4 27-14 3 14-9 26-21 25-4-1-6-5-6-11z" fill="#f08a24"/>
                    <path d="M15 30l7-17 2 20z" fill="#fff" opacity=".7"/>
                </svg>
                <div class="wm-cn">河东软件园</div>
                <div class="wm-url">www.pc0359.cn</div>
            </div>
        `;
    }
}
